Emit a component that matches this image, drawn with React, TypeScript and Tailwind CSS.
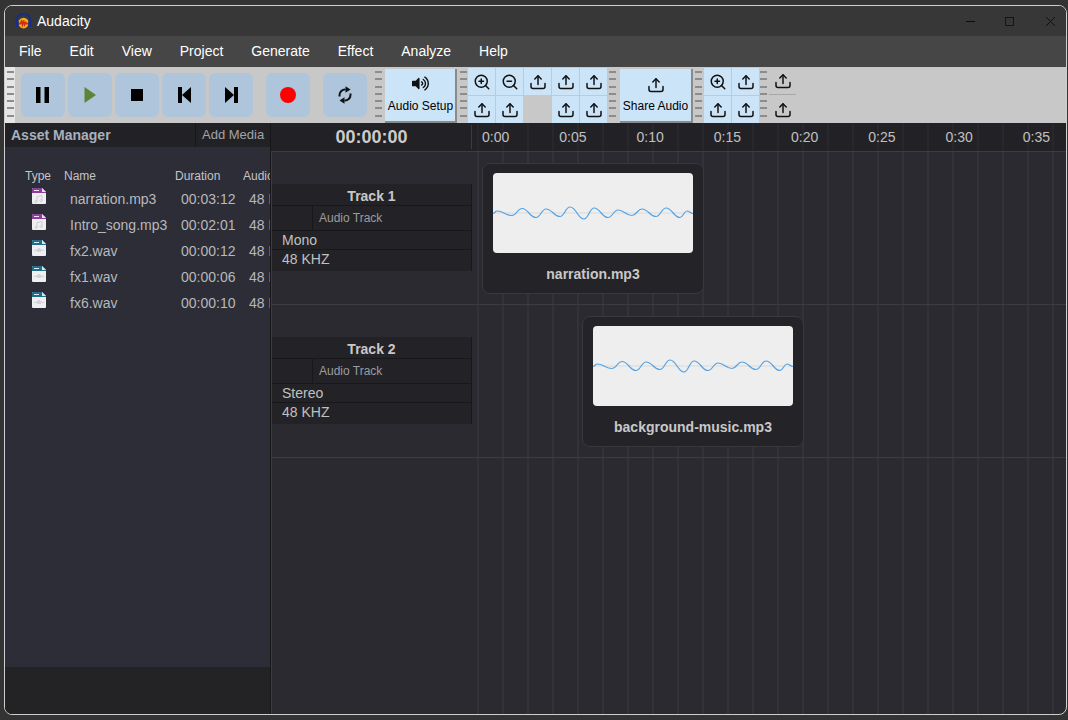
import React from "react";
import { ZoomIn, ZoomOut } from "lucide-react";
import { FaVolumeUp } from "react-icons/fa";

const FONT = "font-['Liberation_Sans',Arial,sans-serif]";

function Grip({ first }: { first?: boolean }) {
  return (
    <div className={first ? "w-[10px] h-full bg-[#e6e6e6] flex flex-col gap-[5.3px] pt-[4px] pl-[2px]" : "w-[8px] h-full flex flex-col gap-[5.3px] pt-[4px]"}>
      {[0, 1, 2, 3, 4, 5, 6].map((i) => (
        <div key={i} className="w-[7px] h-[2px] bg-[#8c8c8c] shrink-0" />
      ))}
    </div>
  );
}

function Share({ size = 16 }: { size?: number }) {
  return (
    <svg width={size} height={size} viewBox="0 0 16 16" fill="none" stroke="#111" strokeWidth="1.5" strokeLinecap="round" strokeLinejoin="round">
      <path d="M8 10.5V2" />
      <path d="M4.8 5 8 1.8 11.2 5" />
      <path d="M1 9.5v3a2 2 0 0 0 2 2h10a2 2 0 0 0 2-2v-3" />
    </svg>
  );
}

function TBtn({ children, ml }: { children: React.ReactNode; ml?: string }) {
  return <div className={`w-[44px] h-[44px] rounded-[6px] bg-[#aec5db] flex items-center justify-center ${ml ?? ""}`}>{children}</div>;
}

function Small({ children, plain }: { children?: React.ReactNode; plain?: boolean }) {
  return (
    <div className={`w-[27px] h-[27px] flex items-center justify-center ${plain ? "" : "bg-[#cce4f7]"}`}>{children}</div>
  );
}

const zi = <ZoomIn size={18} color="#111" strokeWidth={2} />;
const zo = <ZoomOut size={18} color="#111" strokeWidth={2} />;
const sh = <Share />;

function Toolbar() {
  return (
    <div className="h-[56px] bg-[#c8c8c8] flex items-stretch shrink-0">
      <Grip first />
      <div className="flex items-center gap-[3px] ml-[6px]">
        <TBtn>
          <svg width="14" height="16" viewBox="0 0 14 16"><rect x="0" y="0" width="4.5" height="16" /><rect x="8.5" y="0" width="4.5" height="16" /></svg>
        </TBtn>
        <TBtn>
          <svg width="14" height="16" viewBox="0 0 14 16"><path d="M1.5 0 13 8 1.5 16z" fill="#5f8337" /></svg>
        </TBtn>
        <TBtn>
          <svg width="12" height="12" viewBox="0 0 12 12"><rect width="12" height="12" /></svg>
        </TBtn>
        <TBtn>
          <svg width="13" height="16" viewBox="0 0 13 16"><rect width="4" height="16" /><path d="M4 8 13 0v16z" /></svg>
        </TBtn>
        <TBtn>
          <svg width="13" height="16" viewBox="0 0 13 16"><rect x="9" width="4" height="16" /><path d="M9 8 0 0v16z" /></svg>
        </TBtn>
        <TBtn ml="ml-[10px]">
          <div className="w-[16px] h-[16px] rounded-full bg-[#ff0000]" />
        </TBtn>
        <TBtn ml="ml-[10px]">
          <svg width="14" height="18" viewBox="0 0 14 18" fill="none" stroke="#111" strokeWidth="2">
            <path d="M1.5 10.5V9A5.5 5.5 0 0 1 7.5 3.5" />
            <path d="M7.5 0.2 12.5 3.5 7.5 6.8z" fill="#111" stroke="none" />
            <path d="M12.5 7.5V9A5.5 5.5 0 0 1 6.5 14.5" />
            <path d="M6.5 11.2 1.5 14.5 6.5 17.8z" fill="#111" stroke="none" />
          </svg>
        </TBtn>
      </div>
      <div className="ml-[8px]"><Grip /></div>
      <div className="ml-[2px] mt-[2px] w-[72px] h-[54px] bg-[#cce4f7] border-r-2 border-b-2 border-[#8a8a8a] flex flex-col items-center pt-[6px] text-[12px] leading-[14px] text-black">
        <FaVolumeUp size={17} color="#111" />
        <span className="mt-[7px] ml-[1px]">Audio Setup</span>
      </div>
      <div className="ml-[3px]"><Grip /></div>
      <div className="mt-[1px] grid grid-cols-[27px_27px_27px_27px_27px] grid-rows-[27px_27px] gap-[1px]">
        <Small>{zi}</Small><Small>{zo}</Small><Small>{sh}</Small><Small>{sh}</Small><Small>{sh}</Small>
        <Small>{sh}</Small><Small>{sh}</Small><Small plain /><Small>{sh}</Small><Small>{sh}</Small>
      </div>
      <div className="ml-[2px]"><Grip /></div>
      <div className="ml-[3px] mt-[2px] w-[73px] h-[54px] bg-[#cce4f7] border-r-2 border-b-2 border-[#8a8a8a] flex flex-col items-center pt-[8px] text-[12px] leading-[14px] text-black">
        <Share />
        <span className="mt-[6px]">Share Audio</span>
      </div>
      <div className="ml-[2px]"><Grip /></div>
      <div className="ml-[1px] mt-[1px] grid grid-cols-[27px_27px] grid-rows-[27px_27px] gap-[1px]">
        <Small>{zi}</Small><Small>{sh}</Small><Small>{sh}</Small><Small>{sh}</Small>
      </div>
      <div className="ml-[1px]"><Grip /></div>
      <div className="ml-[1px] mt-[1px] flex flex-col">
        <div className="w-[27px] h-[27px] flex items-center justify-center border-b border-[#a8a8a8]">{sh}</div>
        <div className="w-[27px] h-[27px] flex items-center justify-center mt-[1px]">{sh}</div>
      </div>
    </div>
  );
}

function FileIcon({ kind }: { kind: "mp3" | "wav" }) {
  const c = kind === "mp3" ? "#8e3f9e" : "#1f6f8b";
  return (
    <svg width="14" height="16" viewBox="0 0 14 16">
      <path d="M0 1a1 1 0 0 1 1-1h9l4 4v11a1 1 0 0 1-1 1H1a1 1 0 0 1-1-1z" fill="#efeff1" />
      <path d="M0 1a1 1 0 0 1 1-1h9l4 4v1H0z" fill={c} />
      <path d="M10 0l4 4h-4z" fill="#dfe2e8" />
      <rect x="2" y="2" width="5" height="1" fill="#e8e8ee" />
      {kind === "mp3" ? (
        <path d="M5 13V8.5l5-1V12M5 13a1.2 1 0 1 1-.1-.1M10 12a1.2 1 0 1 1-.1-.1" fill="none" stroke="#c9c9cf" strokeWidth="0.9" />
      ) : (
        <path d="M2 10.5h2l1-1.5 1 3 1-4 1 4 1-3 1 1.5h2" fill="none" stroke="#c9c9cf" strokeWidth="0.9" />
      )}
    </svg>
  );
}

const ASSETS: [string, string, "mp3" | "wav"][] = [
  ["narration.mp3", "00:03:12", "mp3"],
  ["Intro_song.mp3", "00:02:01", "mp3"],
  ["fx2.wav", "00:00:12", "wav"],
  ["fx1.wav", "00:00:06", "wav"],
  ["fx6.wav", "00:00:10", "wav"],
];

function AssetPanel() {
  return (
    <div className="w-[266px] shrink-0 flex flex-col border-r border-[#17171a] bg-[#232326]">
      <div className="h-[24px] flex items-stretch shrink-0 bg-[#222226]">
        <div className="w-[191px] shrink-0 pl-[6px] text-[14px] font-bold text-[#a9b1bb] leading-[24px] border-r border-[#17171a]">Asset Manager</div>
        <div className="pl-[6px] text-[13px] text-[#a3a3a8] leading-[24px] whitespace-nowrap">Add Media</div>
      </div>
      <div className="h-[520px] bg-[#2c2d36] overflow-hidden pt-[22px] shrink-0">
        <div className="flex text-[12px] leading-[14px] text-[#c4c4c8] whitespace-nowrap h-[14px]">
          <span className="w-[59px] pl-[20px] shrink-0">Type</span>
          <span className="w-[111px] shrink-0">Name</span>
          <span className="w-[68px] shrink-0">Duration</span>
          <span className="w-[27px] overflow-hidden shrink-0">Audio</span>
        </div>
        <div className="mt-[3px] flex flex-col">
          {ASSETS.map(([n, d, k]) => (
            <div key={n} className="h-[26px] flex text-[14px] leading-[26px] text-[#b8b8bc] whitespace-nowrap">
              <span className="w-[65px] pl-[27px] pt-[2px] shrink-0"><FileIcon kind={k} /></span>
              <span className="w-[111px] shrink-0">{n}</span>
              <span className="w-[68px] shrink-0">{d}</span>
              <span className="w-[21px] overflow-hidden shrink-0">48 KHZ</span>
            </div>
          ))}
        </div>
      </div>
    </div>
  );
}

const PTS: [number, number][] = [
  [0, 40.5], [4, 38], [19, 42.5], [29, 35.5], [43, 44.5], [53, 36], [67, 43.5], [77, 34], [91, 46],
  [101, 35], [115, 44.5], [125, 37], [139, 42.5], [149, 36], [163, 43.5], [173, 35], [187, 44.5], [194, 38], [200, 40.5],
];
const WAVE = PTS.map((p, i) => {
  if (i === 0) return `M${p[0]} ${p[1]}`;
  const q = PTS[i - 1];
  const m = (p[0] - q[0]) * 0.45;
  return `C${q[0] + m} ${q[1]} ${p[0] - m} ${p[1]} ${p[0]} ${p[1]}`;
}).join(" ");

function Clip({ name, ml }: { name: string; ml: string }) {
  return (
    <div className={`${ml} mt-[11px] w-[222px] h-[131px] rounded-[8px] bg-[#242428] border border-[#38383d] pt-[9px] px-[10px] flex flex-col items-center`}>
      <div className="w-[200px] h-[80px] rounded-[4px] bg-[#eeeeee] overflow-hidden shrink-0">
        <svg width="200" height="80" viewBox="0 0 200 80">
          <rect x="0" y="39" width="200" height="2" fill="#e4e4e4" />
          <path d={WAVE} fill="none" stroke="#55a3e4" strokeWidth="1.2" />
        </svg>
      </div>
      <div className="mt-[12px] text-[14px] leading-[18px] font-bold text-[#c8c8c8] whitespace-nowrap">{name}</div>
    </div>
  );
}

function Track({ title, ch, clip, ml }: { title: string; ch: string; clip: string; ml: string }) {
  return (
    <div className="h-[153px] flex items-start border-b border-[#3c3c41]">
      <div className="mt-[32px] w-[200px] h-[87px] bg-[#232327] border-r border-[#18181b] shrink-0 flex flex-col">
        <div className="h-[22px] text-center text-[14px] font-bold leading-[24px] text-[#c8c8c8] border-b border-[#18181b]">{title}</div>
        <div className="h-[25px] flex border-b border-[#18181b]">
          <div className="w-[41px] border-r border-[#18181b]" />
          <div className="pl-[6px] text-[12px] leading-[24px] text-[#9c9c9f]">Audio Track</div>
        </div>
        <div className="h-[19px] pl-[10px] pt-[1px] text-[14px] leading-[16px] text-[#c0c0c0] border-b border-[#18181b]">{ch}</div>
        <div className="h-[21px] pl-[10px] pt-[1px] text-[14px] leading-[16px] text-[#c0c0c0]">48 KHZ</div>
      </div>
      <Clip name={clip} ml={ml} />
    </div>
  );
}

export default function App() {
  return (
    <div className={`w-[1068px] h-[720px] bg-[#333333] pt-[5px] pl-[4px] overflow-hidden ${FONT}`}>
      <div className="w-[1063px] h-[710px] rounded-[8px] border border-[#cfcfcf] overflow-hidden flex flex-col bg-[#2a2a30]">
        <div className="h-[30px] bg-[#373737] flex items-center shrink-0">
          <svg className="ml-[10px]" width="17" height="17" viewBox="0 0 16 16">
            <path d="M1.5 9V7a6.5 6.5 0 0 1 13 0v2" fill="none" stroke="#1a2c8c" strokeWidth="1.6" />
            <circle cx="8" cy="9.5" r="5" fill="#e8b020" />
            <path d="M3 10h2l1-2 1 3 1-4 1 4 1-2 1 1h2" fill="none" stroke="#d82c10" strokeWidth="1.6" />
            <rect x="0.5" y="7" width="3" height="6.5" rx="1.5" fill="#1a2c8c" />
            <rect x="12.5" y="7" width="3" height="6.5" rx="1.5" fill="#1a2c8c" />
          </svg>
          <span className="ml-[5px] text-[14px] text-white">Audacity</span>
          <div className="ml-auto flex items-center mr-[11px]">
            <div className="w-[9px] h-[1px] bg-[#0c0c0c]" />
            <div className="ml-[30px] w-[9px] h-[9px] border border-[#141414]" />
            <svg className="ml-[32px]" width="9" height="9" viewBox="0 0 9 9"><path d="M0 0l9 9M9 0 0 9" stroke="#0c0c0c" strokeWidth="0.9" /></svg>
          </div>
        </div>
        <div className="h-[31px] bg-[#464646] flex items-center gap-[28px] pl-[14px] text-[14px] text-white shrink-0">
          <span>File</span><span>Edit</span><span>View</span><span>Project</span><span>Generate</span><span>Effect</span><span>Analyze</span><span>Help</span>
        </div>
        <Toolbar />
        <div className="flex flex-1 min-h-0">
          <AssetPanel />
          <div className="flex-1 min-w-0 flex flex-col">
            <div className="h-[29px] bg-[#222226] flex border-b border-[#3c3c41] shrink-0 overflow-hidden">
              <div className="ml-[1px] w-[200px] shrink-0 border-r border-[#3c3c41] my-[2px] text-center text-[18px] font-bold leading-[24px] text-[#cccccc]">00:00:00</div>
              <div className="flex-1 flex pl-[10px] bg-[repeating-linear-gradient(90deg,#28282c_-20px,#28282c_-18px,transparent_-18px,transparent_5px)]">
                {["0:00", "0:05", "0:10", "0:15", "0:20", "0:25", "0:30", "0:35"].map((t) => (
                  <span key={t} className="w-[77.25px] shrink-0 text-[14px] leading-[28px] text-[#c0c0c0]">{t}</span>
                ))}
              </div>
            </div>
            <div className="flex-1 border-l border-[#3c3c41] bg-[linear-gradient(90deg,#2a2a30_0,#2a2a30_205px,transparent_205px),repeating-linear-gradient(90deg,#323238_-20px,#323238_-18px,transparent_-18px,transparent_5px)]">
              <Track title="Track 1" ch="Mono" clip="narration.mp3" ml="ml-[10px]" />
              <Track title="Track 2" ch="Stereo" clip="background-music.mp3" ml="ml-[110px]" />
            </div>
          </div>
        </div>
      </div>
    </div>
  );
}
